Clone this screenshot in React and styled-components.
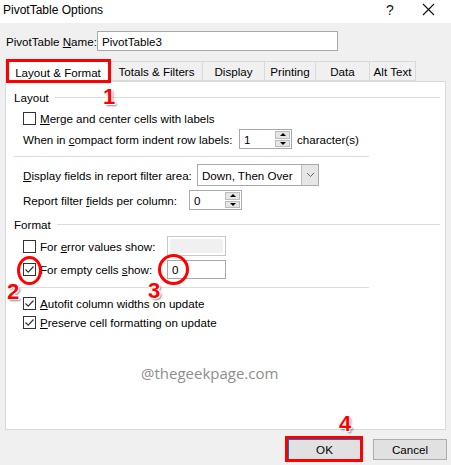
import React from 'react';
import styled, { createGlobalStyle } from 'styled-components';

const GlobalStyle = createGlobalStyle`
  html, body {
    margin: 0;
    padding: 0;
    background: #f0f0f0;
  }
  body {
    font-family: "Liberation Sans", Arial, sans-serif;
    font-size: 11.6px;
    color: #000;
  }
`;

const Dialog = styled.div`
  width: 451px;
  height: 465px;
  background: #f0f0f0;
  display: flex;
  flex-direction: column;
  overflow: hidden;
  position: relative;
`;

const TitleBar = styled.div`
  height: 23px;
  background: #fff;
  display: flex;
  align-items: center;
  padding-left: 3px;
  font-size: 12px;
`;

const TitleText = styled.div`
  flex: 1;
  margin-top: -3px;
`;

const TitleButton = styled.div`
  width: ${p => p.$w}px;
  text-align: center;
  font-size: ${p => p.$size}px;
  margin-top: -3px;
  color: #111;
`;

const NameRow = styled.div`
  display: flex;
  align-items: center;
  height: 20px;
  margin-top: 8px;
  padding-left: 6px;
`;

const NameLabel = styled.span`
  width: 91px;
  white-space: nowrap;
`;

const TextBox = styled.div`
  box-sizing: border-box;
  width: ${p => p.$w}px;
  height: ${p => p.$h || 20}px;
  border: 1px solid ${p => (p.$disabled ? '#c8c8c8' : '#a9a9a9')};
  background: #fff;
  padding: ${p => (p.$disabled ? '2px' : '0 4px')};
  display: flex;
  align-items: center;
  flex-shrink: 0;
`;

const DisabledFill = styled.div`
  width: 100%;
  height: 100%;
  background: #f0f0f0;
`;

const TabStrip = styled.div`
  display: flex;
  align-items: flex-end;
  height: 22px;
  margin-top: 8px;
  padding-left: 5px;
  position: relative;
  z-index: 1;
`;

const Tab = styled.div`
  box-sizing: border-box;
  width: ${p => p.$w}px;
  height: ${p => (p.$active ? 22 : 20)}px;
  border: 1px solid #d9d9d9;
  border-left: ${p => (p.$first ? '1px solid #d9d9d9' : 'none')};
  border-bottom: ${p => (p.$active ? 'none' : '1px solid #d9d9d9')};
  background: ${p => (p.$active ? '#fff' : '#f0f0f0')};
  display: flex;
  align-items: center;
  justify-content: center;
  padding-top: 1px;
  position: relative;
  white-space: nowrap;
  margin-bottom: ${p => (p.$active ? -1 : 0)}px;
`;

const RedBox = styled.div`
  position: absolute;
  left: ${p => p.$l}px;
  top: ${p => p.$t}px;
  right: ${p => p.$r}px;
  bottom: ${p => p.$b}px;
  border: 3px solid #f00;
  pointer-events: none;
`;

const Panel = styled.div`
  box-sizing: border-box;
  margin: 0 5px;
  height: 349px;
  background: #fff;
  border: 1px solid #d9d9d9;
  padding: 0 5px 0 8px;
  display: flex;
  flex-direction: column;
`;

const GroupHeader = styled.div`
  display: flex;
  align-items: center;
  gap: 6px;
  height: 16px;
  margin-top: ${p => p.$mt}px;
`;

const HeaderLine = styled.div`
  flex: 1;
  height: 1px;
  background: #dcdcdc;
`;

const Separator = styled.div`
  width: 355px;
  height: 1px;
  background: #dcdcdc;
  margin-top: ${p => p.$mt}px;
`;

const Row = styled.div`
  display: flex;
  align-items: center;
  height: ${p => p.$h || 16}px;
  margin-top: ${p => p.$mt}px;
  padding-left: 9px;
  position: relative;
`;

const FieldLabel = styled.span`
  width: ${p => (p.$w ? `${p.$w}px` : 'auto')};
  margin-left: ${p => p.$ml || 0}px;
  flex-shrink: 0;
  white-space: nowrap;
`;

const CheckLabel = styled.label`
  display: flex;
  align-items: center;
  width: ${p => (p.$w ? `${p.$w}px` : 'auto')};
  flex-shrink: 0;
  white-space: nowrap;
  position: relative;
`;

const Box = styled.span`
  box-sizing: border-box;
  width: 13px;
  height: 13px;
  border: 1px solid #333;
  background: #fff;
  margin-right: 4px;
  display: flex;
  align-items: center;
  justify-content: center;
  flex-shrink: 0;
`;

const SpinBox = styled.div`
  box-sizing: border-box;
  width: ${p => p.$w}px;
  height: 20px;
  border: 1px solid #a9a9a9;
  background: #fff;
  display: flex;
  align-items: stretch;
  flex-shrink: 0;
`;

const SpinValue = styled.div`
  flex: 1;
  padding-left: 4px;
  display: flex;
  align-items: center;
`;

const SpinButtons = styled.div`
  width: 15px;
  display: flex;
  flex-direction: column;
  padding: 1px 1px 1px 0;
  gap: 1px;
`;

const SpinBtn = styled.div`
  flex: 1;
  background: #e6e6e6;
  border: 1px solid #bcbcbc;
  display: flex;
  align-items: center;
  justify-content: center;
`;

const Arrow = styled.span`
  width: 0;
  height: 0;
  border-left: 3px solid transparent;
  border-right: 3px solid transparent;
  ${p => (p.$up ? 'border-bottom: 3px solid #000;' : 'border-top: 3px solid #000;')}
`;

const Combo = styled.div`
  box-sizing: border-box;
  width: 122px;
  height: 22px;
  border: 1px solid #a9a9a9;
  background: #fff;
  display: flex;
  flex-shrink: 0;
`;

const ComboValue = styled.div`
  flex: 1;
  padding-left: 4px;
  display: flex;
  align-items: center;
`;

const ComboArrow = styled.div`
  width: 16px;
  background: #e6e6e6;
  border-left: 1px solid #bcbcbc;
  display: flex;
  align-items: center;
  justify-content: center;
`;

const Watermark = styled.div`
  margin-top: 33px;
  padding-left: 127px;
  font-family: "Open Sans", "Noto Sans", sans-serif;
  font-size: 15px;
  color: #8e8e8e;
`;

const Footer = styled.div`
  display: flex;
  justify-content: flex-end;
  gap: 12px;
  padding: 9px 4px 0 0;
`;

const Button = styled.div`
  box-sizing: border-box;
  width: ${p => p.$w}px;
  height: 21px;
  background: #e1e1e1;
  border: 1px solid ${p => (p.$default ? '#0078d7' : '#adadad')};
  display: flex;
  align-items: center;
  justify-content: center;
  position: relative;
`;

const Badge = styled.div`
  position: absolute;
  left: ${p => p.$x}px;
  top: ${p => p.$y}px;
  font-family: "Liberation Sans", Arial, sans-serif;
  font-weight: bold;
  font-size: 22px;
  line-height: 1;
  color: #f00;
  text-shadow: 1px 1px 0 #fff, -1px -1px 0 #fff, 1px -1px 0 #fff, -1px 1px 0 #fff,
    2px 2px 2px rgba(0, 0, 0, 0.45);
  pointer-events: none;
  z-index: 5;
`;

const Ring = styled.div`
  position: absolute;
  left: ${p => p.$x}px;
  top: ${p => p.$y}px;
  width: ${p => p.$w}px;
  height: ${p => p.$h}px;
  box-sizing: border-box;
  border: 3px solid #f00;
  border-radius: 50%;
  pointer-events: none;
  z-index: 4;
`;

const U = styled.span`
  text-decoration: underline;
  text-underline-offset: 1px;
`;

const Check = () => (
  <svg width="11" height="11" viewBox="0 0 11 11">
    <path d="M1.5 5.5 L4.2 8.2 L9.5 2.5" fill="none" stroke="#333" strokeWidth="1.2" />
  </svg>
);

const Checkbox = ({ checked }) => <Box>{checked && <Check />}</Box>;

const Spin = ({ w, value }) => (
  <SpinBox $w={w}>
    <SpinValue>{value}</SpinValue>
    <SpinButtons>
      <SpinBtn><Arrow $up /></SpinBtn>
      <SpinBtn><Arrow /></SpinBtn>
    </SpinButtons>
  </SpinBox>
);

const tabs = [
  { label: 'Layout & Format', w: 106 },
  { label: 'Totals & Filters', w: 92 },
  { label: 'Display', w: 62 },
  { label: 'Printing', w: 51 },
  { label: 'Data', w: 54 },
  { label: 'Alt Text', w: 46 },
];

export default function App() {
  return (
    <Dialog>
      <GlobalStyle />
      <TitleBar>
        <TitleText>PivotTable Options</TitleText>
        <TitleButton $w={30} $size={14}>?</TitleButton>
        <TitleButton $w={46} $size={18}>
          <svg width="13" height="13" viewBox="0 0 13 13">
            <path d="M1 1 L12 12 M12 1 L1 12" stroke="#111" strokeWidth="1.1" />
          </svg>
        </TitleButton>
      </TitleBar>

      <NameRow>
        <NameLabel>PivotTable <U>N</U>ame:</NameLabel>
        <TextBox $w={241} $h={20}>PivotTable3</TextBox>
      </NameRow>

      <TabStrip>
        {tabs.map((t, i) => (
          <Tab key={t.label} $w={t.w} $active={i === 0} $first={i === 0}>
            {t.label}
            {i === 0 && <RedBox $l={0} $t={-2} $r={-1} $b={-1} />}
          </Tab>
        ))}
        <Badge $x={103} $y={27}>1</Badge>
      </TabStrip>

      <Panel>
        <GroupHeader $mt={7}>
          Layout
          <HeaderLine />
        </GroupHeader>
        <Row $mt={5}>
          <CheckLabel>
            <Checkbox />
            <span><U>M</U>erge and center cells with labels</span>
          </CheckLabel>
        </Row>
        <Row $h={20} $mt={3}>
          <FieldLabel $w={216}>When in <U>c</U>ompact form indent row labels:</FieldLabel>
          <Spin w={53} value="1" />
          <FieldLabel $ml={5}>character(s)</FieldLabel>
        </Row>
        <Separator $mt={7} />
        <Row $h={22} $mt={7}>
          <FieldLabel $w={174}><U>D</U>isplay fields in report filter area:</FieldLabel>
          <Combo>
            <ComboValue>Down, Then Over</ComboValue>
            <ComboArrow>
              <svg width="9" height="6" viewBox="0 0 9 6">
                <path d="M1 1 L4.5 4.5 L8 1" fill="none" stroke="#666" strokeWidth="1" />
              </svg>
            </ComboArrow>
          </Combo>
        </Row>
        <Row $h={20} $mt={4}>
          <FieldLabel $w={166}>Report filter <U>f</U>ields per column:</FieldLabel>
          <Spin w={53} value="0" />
        </Row>

        <GroupHeader $mt={6}>
          Format
          <HeaderLine />
        </GroupHeader>
        <Row $h={20} $mt={4}>
          <CheckLabel $w={144}>
            <Checkbox />
            <span>For <U>e</U>rror values show:</span>
          </CheckLabel>
          <TextBox $w={59} $disabled><DisabledFill /></TextBox>
        </Row>
        <Row $h={19} $mt={4}>
          <CheckLabel $w={144}>
            <Checkbox checked />
            <span>For empty cells <U>s</U>how:</span>
            <Ring $x={-6} $y={-7} $w={25} $h={29} />
          </CheckLabel>
          <TextBox $w={59} $h={19}>0</TextBox>
          <Ring $x={144} $y={-6} $w={31} $h={31} />
        </Row>
        <Separator $mt={8} />
        <Row $mt={7}>
          <CheckLabel>
            <Checkbox checked />
            <span><U>A</U>utofit column widths on update</span>
          </CheckLabel>
          <Badge $x={-7} $y={-14}>2</Badge>
          <Badge $x={134} $y={-15}>3</Badge>
        </Row>
        <Row $mt={3}>
          <CheckLabel>
            <Checkbox checked />
            <span><U>P</U>reserve cell formatting on update</span>
          </CheckLabel>
        </Row>
        <Watermark>@thegeekpage.com</Watermark>
      </Panel>

      <Footer>
        <Button $w={73} $default>
          OK
          <RedBox $l={-4} $t={-4} $r={-3} $b={-3} />
          <Badge $x={50} $y={-27}>4</Badge>
        </Button>
        <Button $w={74}>Cancel</Button>
      </Footer>
    </Dialog>
  );
}
